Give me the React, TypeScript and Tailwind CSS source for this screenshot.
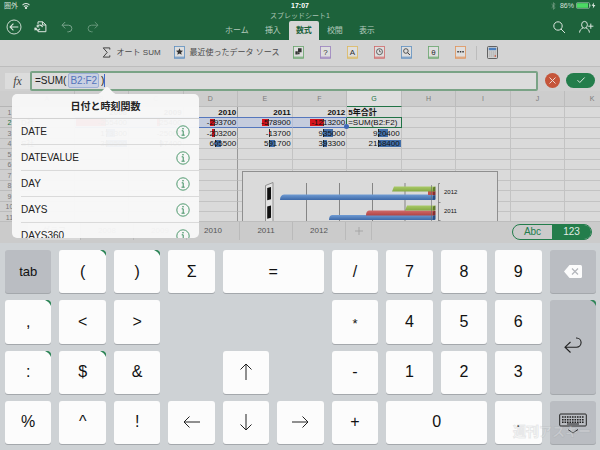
import type { CSSProperties, ReactNode } from "react"

interface Cell {
  text: string
  color?: "red" | "blue"
  left?: number
  width?: number
}

const COLUMNS = ["A", "B", "C", "D", "E", "F", "G", "H", "I", "J", "K"]
const ROWS = [1, 2, 3, 4, 5, 6, 7, 8, 9, 10, 11]

const CELLS: Record<string, Cell> = {
  B1: { text: "2008" },
  C1: { text: "2009" },
  D1: { text: "2010" },
  E1: { text: "2011" },
  F1: { text: "2012" },
  G1: { text: "5年合計" },
  A2: { text: "D社" },
  B2: { text: "-255400", color: "red", left: 2, width: 56 },
  C2: { text: "-25400", color: "red", left: 53, width: 5 },
  D2: { text: "-293700", color: "red", left: 49, width: 9 },
  E2: { text: "-578900", color: "red", left: 45, width: 13 },
  F2: { text: "-1213200", color: "red", left: 33, width: 25 },
  G2: { text: "=SUM(B2:F2)" },
  A3: { text: "A社" },
  B3: { text: "173300", color: "blue", left: 58, width: 18 },
  C3: { text: "-25000" },
  D3: { text: "-203200", color: "red", left: 53, width: 6 },
  E3: { text: "-13700", color: "red", left: 57, width: 1 },
  F3: { text: "935000", color: "blue", left: 57, width: 19 },
  G3: { text: "920400", color: "blue", left: 58, width: 18 },
  A4: { text: "S社" },
  B4: { text: "380500", color: "blue", left: 58, width: 40 },
  C4: { text: "97400", color: "blue", left: 58, width: 4 },
  D4: { text: "605500", color: "blue", left: 58, width: 12 },
  E4: { text: "591700", color: "blue", left: 58, width: 11 },
  F4: { text: "393300", color: "blue", left: 57, width: 8 },
  G4: { text: "2168400", color: "blue", left: 57, width: 43 },
}

const FUNCTIONS = ["DATE", "DATEVALUE", "DAY", "DAYS", "DAYS360"]
const SHEETS = ["グラフ", "2008", "2009", "2010", "2011", "2012"]

function StatusBar() {
  return (
    <div className="grid h-[11px] grid-cols-3 items-center px-1 text-[7px] leading-[11px] text-[#d5e0d9]">
      <div className="flex items-center gap-1">
        <span>圏外</span>
        <svg viewBox="0 0 8 6" className="h-[6px] w-2" fill="none" stroke="currentColor" strokeWidth="1.1">
          <path d="M.5 2.2C2.6.2 5.4.2 7.5 2.2M1.9 3.7c1.3-1.2 2.9-1.2 4.2 0" />
          <circle cx="4" cy="5" r=".6" fill="currentColor" />
        </svg>
      </div>
      <span className="text-center text-[7px] font-bold text-white">17:07</span>
      <div className="flex items-center justify-end gap-[2px]">
        <svg viewBox="0 0 5 8" className="mr-[2px] h-2 w-[5px]" fill="none" stroke="#7fa58e" strokeWidth=".7">
          <path d="M.6 2.2l3.6 3.4L2.4 7.3V.7l1.8 1.7L.6 5.8" />
        </svg>
        <span>86%</span>
        <svg viewBox="0 0 20 7" className="h-[7px] w-5">
          <rect x=".5" y=".7" width="13" height="5.6" rx=".8" fill="none" stroke="#b9d3c3" strokeWidth=".6" />
          <rect x="1" y="1.2" width="11" height="4.6" fill="#4cd964" />
          <path d="M14 2.5v2" stroke="#b9d3c3" />
          <path d="M18 .6l-2.4 3.2h1.6L16.8 6.4 19.4 3h-1.7z" fill="#e6efe9" />
        </svg>
      </div>
    </div>
  )
}

function Header() {
  return (
    <header className="bg-[#1d623b]">
      <StatusBar />
      <div className="grid grid-cols-[1fr_auto_1fr] text-[#dce6df]">
        <div className="flex items-center gap-3 pt-[2px] pl-[6px]">
          <button aria-label="戻る">
            <svg viewBox="0 0 16 16" className="size-4" fill="none" stroke="currentColor">
              <circle cx="8" cy="8" r="7" strokeWidth=".9" />
              <path d="M12.3 8H4.2M7.4 4.7L4.1 8l3.3 3.3" strokeWidth="1.1" />
            </svg>
          </button>
          <button aria-label="ファイル">
            <svg viewBox="0 0 14 14" className="size-[14px]" fill="none" stroke="currentColor" strokeWidth="1">
              <path d="M4 4.500V1.800h4.600l3.300 3v6.900H4V10" />
              <path d="M8.400 1.800V5h3.400" />
              <path d="M8.500 7.200A2.700 2.700 0 0 0 3.400 6.600M.9 7.600a2.700 2.700 0 0 0 5 1.100" strokeWidth="1.2" />
              <path d="M3.200 4.900v2h2M1 10.400V8.300h2" />
            </svg>
          </button>
          <button aria-label="元に戻す" className="text-[#78a38b]">
            <svg viewBox="0 0 14 14" className="size-[14px]" fill="none" stroke="currentColor" strokeWidth="1">
              <path d="M5.2 2L2 5.2l3.2 3.2M2 5.2h6.600a3.300 3.300 0 0 1 0 6.600H7.400" />
            </svg>
          </button>
          <button aria-label="やり直し" className="text-[#649679]">
            <svg viewBox="0 0 14 14" className="size-[14px]" fill="none" stroke="currentColor" strokeWidth="1">
              <path d="M8.800 2L12 5.200 8.800 8.400M12 5.200H5.400a3.300 3.300 0 0 0 0 6.600h1.200" />
            </svg>
          </button>
        </div>
        <div>
          <h1 className="text-center text-[7px] leading-[10px] text-[#a9c4b4]">スプレッドシート1</h1>
          <nav className="flex text-[8px] leading-[19px]">
            {["ホーム", "挿入", "数式", "校閲", "表示"].map((tab) => (
              <button
                key={tab}
                className={
                  tab === "数式"
                    ? "rounded-t-[2px] bg-[#d6d6d6] px-[7px] font-bold text-[#1d623b]"
                    : "px-2 text-[#b4cbbd]"
                }
              >
                {tab}
              </button>
            ))}
          </nav>
        </div>
        <div className="flex items-center justify-end gap-3 pt-[2px] pr-[6px]">
          <button aria-label="検索">
            <svg viewBox="0 0 14 14" className="size-[14px]" fill="none" stroke="currentColor" strokeWidth="1">
              <circle cx="6" cy="6" r="4.2" />
              <path d="M9 9l4 4" />
            </svg>
          </button>
          <button aria-label="共有">
            <svg viewBox="0 0 16 14" className="h-[14px] w-4" fill="none" stroke="currentColor" strokeWidth="1">
              <ellipse cx="6.5" cy="4.8" rx="2.9" ry="3.4" />
              <path d="M1.600 12.600c.1-2.400 1.200-3.600 3.200-4.400M8.200 8.200c2 .8 3.100 2 3.200 4.400M10.200 6.200h5.200M12.800 3.600v5.200" />
            </svg>
          </button>
        </div>
      </div>
    </header>
  )
}

function Book({ label, color, children }: { label: string; color: string; children: ReactNode }) {
  return (
    <button aria-label={label}>
      <svg viewBox="0 0 11 13" className="h-[13px] w-[11px]" style={{ color } as CSSProperties}>
        <rect x=".5" y=".5" width="10" height="11.8" fill="#dedede" stroke="currentColor" strokeWidth=".8" />
        <path d="M.5 11.2h10" stroke="currentColor" strokeWidth="1" />
        <g fill="#333" fontFamily="Liberation Sans, sans-serif" fontSize="8" textAnchor="middle">
          {children}
        </g>
      </svg>
    </button>
  )
}

function Ribbon() {
  return (
    <div className="flex h-[27px] items-center justify-center border-b border-[#bdbdbd] bg-[#d4d4d4] pb-px text-[8px] text-[#4a4a4a]">
      <button className="flex items-center gap-[6px]">
        <svg viewBox="0 0 9 11" className="h-[11px] w-[9px]" fill="none" stroke="#444" strokeWidth="1">
          <path d="M7.800 2.600V.9H1.200l4 4.500-4 4.700h6.600V8.300" />
        </svg>
        オート SUM
      </button>
      <div className="ml-[13px] flex items-center gap-[5px]">
        <Book label="最近使った関数" color="#5f8fc0">
          <path d="M5.500 2.300l1 2.300 2.500.2-1.900 1.600.6 2.400-2.200-1.300-2.200 1.300.6-2.400L2 4.800l2.500-.2z" />
        </Book>
        <span>最近使ったデータ ソース</span>
      </div>
      <div className="ml-[14px] flex items-center gap-4">
        <Book label="財務" color="#68a56c">
          <path d="M5 2.200h3.600v4H5zM2.400 5.200h2.400v3.400H2.400zM5 6.400h1.600v1.800H5z" />
        </Book>
        <Book label="論理" color="#9a80bd">
          <text x="5.5" y="9">?</text>
        </Book>
        <Book label="文字列" color="#dcb95f">
          <text x="5.5" y="9">A</text>
        </Book>
        <Book label="日付と時刻" color="#cf6a6a">
          <circle cx="5.5" cy="5.7" r="3" fill="none" stroke="#444" strokeWidth=".8" />
          <path d="M5.500 3.800v2h1.700" fill="none" stroke="#444" strokeWidth=".7" />
        </Book>
        <Book label="検索/行列" color="#5f8fc0">
          <circle cx="4.9" cy="5" r="2.3" fill="none" stroke="#333" strokeWidth=".8" />
          <path d="M6.600 6.700l2.300 2.300" stroke="#333" strokeWidth="1" />
        </Book>
        <Book label="数学/三角" color="#68a56c">
          <text x="5.5" y="9">θ</text>
        </Book>
        <Book label="その他の関数" color="#e0935a">
          <path d="M2.300 5h1.500v1.500H2.300zM4.800 5h1.500v1.500H4.800zM7.300 5h1.500v1.500H7.300z" />
        </Book>
      </div>
      <span className="ml-[10px] h-[14px] w-px bg-[#bcbcbc]" />
      <button aria-label="再計算" className="ml-[10px]">
        <svg viewBox="0 0 11 13" className="h-[13px] w-[11px]">
          <rect x=".5" y=".5" width="10" height="12" rx="1" fill="#cfcfcf" stroke="#555" strokeWidth=".9" />
          <path d="M1.800 1.800h7.400v2.400H1.800z" fill="#4c80be" />
          <path d="M2 6h7M2 8h7M2 10h7" stroke="#aaa" strokeWidth="1" strokeDasharray="1.4 .6" />
          <path d="M7.600 10h1.400" stroke="#d0573c" strokeWidth="1.4" />
        </svg>
      </button>
    </div>
  )
}

function FormulaBar() {
  return (
    <div className="flex h-6 items-center bg-[#d0d0d0] px-[5px] pt-[3px]">
      <label
        htmlFor="formula"
        className="h-4 w-[25px] bg-[#dcdcdc] text-center font-['Liberation_Serif',serif] text-[12px] leading-4 text-[#444] italic"
      >
        fx
      </label>
      <div className="flex h-5 flex-1 items-center rounded-[2px] border-2 border-[#7aa386] bg-[#dcdcdc] pl-[3px] text-[10px] leading-4 text-[#222]">
        <span>=SUM(</span>
        <span className="mx-[2px] rounded-[2px] border border-[#9fb0d8] bg-[#c9d0e2] px-px leading-[13px] text-[#5474bb]">
          B2:F2
        </span>
        <input
          id="formula"
          defaultValue=")"
          className="field-sizing-content bg-transparent text-[#222] outline-none"
        />
        <span className="h-[13px] w-px bg-[#4267c9]" />
      </div>
      <div className="ml-[7px] flex items-center gap-[6px] pb-px">
        <button aria-label="キャンセル" className="size-[15px] rounded-full bg-[#c5553a]">
          <svg viewBox="0 0 15 15" className="size-[15px]" stroke="#eadad5" strokeWidth="1">
            <path d="M4.500 4.500l6 6M10.500 4.500l-6 6" />
          </svg>
        </button>
        <button aria-label="確定" className="flex h-[15px] w-[29px] items-center justify-center rounded-full bg-[#237d4b]">
          <svg viewBox="0 0 10 8" className="h-2 w-[10px]" fill="none" stroke="#d8e8de" strokeWidth="1">
            <path d="M1.500 4.200l2.300 2.300 4.800-5" />
          </svg>
        </button>
      </div>
    </div>
  )
}

function DataCell({ id }: { id: string }) {
  const cell = CELLS[id]
  const column = id[0]
  const selected = /^[B-F]2$/.test(id)
  const active = id === "G2"
  const leftAligned = column === "A" || id === "G1" || active
  let look = "border-[#c3c3c3]"
  if (selected) look = "border-r-[#b4bfd8] border-b-[#5577bd] bg-[#c5ccdd] shadow-[0_-1px_0_#5577bd]"
  if (active) look = "border-[#217346] shadow-[0_-1px_0_#217346,-1px_0_0_#217346]"
  if (column === "D" && !selected) look = "border-b-[#c3c3c3] border-r-[#989898]"

  return (
    <td className={`relative border-r border-b p-0 ${look}`}>
      {cell?.color && (
        <span
          className={`absolute inset-y-px border-dashed ${
            cell.color === "red" ? "border-r border-[#333] bg-[#d4131d]" : "border-l border-[#222] bg-[#426fa9]"
          }`}
          style={{ left: `${cell.left}%`, width: `${cell.width}%` }}
        />
      )}
      {cell && (
        <span
          className={`relative block px-px whitespace-nowrap ${leftAligned ? "text-left" : "text-right"} ${
            id[1] === "1" ? "font-bold" : ""
          }`}
        >
          {cell.text}
        </span>
      )}
      {id === "F2" && <span className="absolute -right-[3px] -bottom-[2px] z-10 size-[5px] rounded-full bg-[#3f68b8]" />}
    </td>
  )
}

function SheetChart() {
  return (
    <svg
      viewBox="0 0 256 60"
      className="absolute top-[80px] left-[242px] h-[60px] w-[256px]"
      fontFamily="Liberation Sans, sans-serif"
    >
      <defs>
        <linearGradient id="blueBar" x2="0" y2="1">
          <stop offset="0" stopColor="#6f9bd3" />
          <stop offset="1" stopColor="#3d69a8" />
        </linearGradient>
        <linearGradient id="redBar" x2="0" y2="1">
          <stop offset="0" stopColor="#d0696a" />
          <stop offset="1" stopColor="#b04444" />
        </linearGradient>
        <linearGradient id="greenBar" x2="0" y2="1">
          <stop offset="0" stopColor="#a9ca66" />
          <stop offset="1" stopColor="#86a946" />
        </linearGradient>
      </defs>
      <rect x=".5" y=".5" width="255" height="80" fill="#dadada" stroke="#8f8f8f" />
      <path d="M23.500 70V14.500l7.500-3V70" fill="#e2e2e2" stroke="#888" strokeWidth=".9" />
      <path d="M25.200 17l3.800-1v12.200l-3.800 1zM25.200 35.500l3.800-1v12.200l-3.800 1z" fill="#111" />
      <path d="M64.500 12v60M97.500 12v60M130.500 12v60M163 12v60" stroke="#858585" />
      <path d="M38 29q0-5 4-5.500h151v5.500z" fill="url(#blueBar)" />
      <path d="M186 20h6l1 4h-7z" fill="#c0524d" />
      <path d="M150 20.500l2-5h41v5z" fill="url(#greenBar)" />
      <path d="M87 49q0-4.500 3-5h103v5z" fill="url(#blueBar)" />
      <path d="M124 44.500q0-4.500 3-5h66v5z" fill="url(#redBar)" />
      <path d="M163 39.500l2-5h28v5z" fill="url(#greenBar)" />
      <path d="M191 20.500v-4l2.500-1v4.500zM191 39.500v-4l2.500-1v4.500z" fill="#5e792c" />
      <path d="M191 24.500v-3.500l2.500-1v4zM191 44.500v-4l2.500-1v4.500z" fill="#842f30" />
      <path d="M191 29v-4l2.500-1v4.500zM191 49v-4l2.500-1v4.500z" fill="#2b4f85" />
      <path d="M189.500 14v56" stroke="#6b6b6b" strokeWidth=".6" />
      <path d="M198 12.500h-1.500V70M196.500 31.500h2M196.500 49.500h2" fill="none" stroke="#777" strokeWidth=".8" />
      <text x="202" y="23" fontSize="6" fill="#111">2012</text>
      <text x="202" y="42" fontSize="6" fill="#111">2011</text>
    </svg>
  )
}

function Sheet() {
  return (
    <main className="relative min-h-0 flex-1 overflow-hidden bg-[#dadada]">
      <table className="w-[calc(100%+20px)] table-fixed border-separate border-spacing-0 text-[8px] leading-[9px] text-[#111]">
        <thead>
          <tr className="h-4 bg-[#cdcdcd] text-[7px] text-[#7b7b7b]">
            <th className="w-5 border-b border-[#b5b5b5] p-0" />
            {COLUMNS.map((column) => (
              <th
                key={column}
                className={`border-r p-0 font-normal ${
                  column === "G"
                    ? "border-r-[#bcbcbc] border-b border-b-[#217346] bg-[#dedede] text-[#217346]"
                    : "border-b border-[#bcbcbc]"
                }`}
              >
                {column}
              </th>
            ))}
          </tr>
        </thead>
        <tbody>
          {ROWS.map((row) => (
            <tr key={row} className="h-[11px] even:h-[10px]">
              <th
                className={`border-r border-b border-[#bcbcbc] bg-[#cfcfcf] p-0 text-[7px] font-normal ${
                  row === 2 ? "text-[#217346]" : "text-[#777]"
                }`}
              >
                {row}
              </th>
              {COLUMNS.map((column) => (
                <DataCell key={column} id={`${column}${row}`} />
              ))}
            </tr>
          ))}
        </tbody>
      </table>
      <SheetChart />
    </main>
  )
}

function SheetTabs() {
  return (
    <footer className="flex h-[22px] items-stretch border-t border-[#bdbdbd] bg-[#cbcbcb] pb-[3px] pl-[28px] text-[8px] text-[#555]">
      {SHEETS.map((sheet) => (
        <button
          key={sheet}
          className={`w-[53px] border-r border-[#bababa] ${sheet === "グラフ" ? "bg-[#d8d8d8]" : ""}`}
        >
          {sheet}
        </button>
      ))}
      <button aria-label="シートの追加" className="flex w-[26px] items-center justify-center border-r border-[#bababa]">
        <svg viewBox="0 0 8 8" className="size-2" stroke="#a0a0a0" strokeWidth=".8">
          <path d="M0 4h8M4 0v8" />
        </svg>
      </button>
      <div className="mt-[2px] mr-2 ml-auto grid w-20 grid-cols-2 overflow-hidden rounded-full border border-[#237d4b] text-[10px] leading-[14px]">
        <button className="text-[#237d4b]">Abc</button>
        <button className="bg-[#237d4b] text-[#e0ece5]">123</button>
      </div>
    </footer>
  )
}

function FunctionMenu() {
  return (
    <section className="absolute top-[94px] left-3 h-36 w-[187px] text-[#222]">
      <svg viewBox="0 0 20 8" className="absolute -top-[7px] left-[85px] h-2 w-5" fill="#f6f6f6">
        <path d="M0 7.500C4 7 7.500 0 10 0s6 7 10 7.500z" />
      </svg>
      <div className="h-full overflow-hidden rounded-[5px] bg-[#f8f8f8]/96">
        <h2 className="h-[25px] border-b border-[#d2d2d2] text-center text-[10px] leading-[25px] font-bold">
          日付と時刻関数
        </h2>
        <ul className="pl-[9px]">
          {FUNCTIONS.map((name) => (
            <li key={name} className="flex h-[26px] items-center justify-between border-b border-[#dadada] pr-[9px]">
              <button className="text-[10px]">{name}</button>
              <button aria-label={`${name} の情報`}>
                <svg viewBox="0 0 14 14" className="size-[14px]" fill="none" stroke="#3d8f60">
                  <circle cx="7" cy="7" r="6.2" strokeWidth=".9" />
                  <path d="M5.700 5.800h1.500v4.200M5.500 10.200h3.200" strokeWidth="1" />
                  <circle cx="7" cy="3.7" r=".8" fill="#3d8f60" stroke="none" />
                </svg>
              </button>
            </li>
          ))}
        </ul>
      </div>
    </section>
  )
}

interface KeyProps {
  label?: string
  children: ReactNode
  place?: string
  gray?: boolean
  corner?: boolean
}

function Key({ label, children, place = "", gray, corner }: KeyProps) {
  return (
    <button
      aria-label={label}
      className={`relative flex items-center justify-center overflow-hidden rounded-[3px] shadow-[0_1px_0_#a4a8ac] ${
        gray ? "bg-[#babdc2]" : "bg-[#fcfcfc]"
      } ${place}`}
    >
      {children}
      {corner && (
        <svg viewBox="0 0 6 6" className="absolute top-0 right-0 size-[6px]" fill="#2f8558">
          <path d="M0 0h3.500Q6 .3 6 2.500V6Q4.500 2 0 0z" />
        </svg>
      )}
    </button>
  )
}

const ARROWS: Record<string, string> = {
  up: "M9 17V1M3.500 6.500L9 1l5.500 5.500",
  down: "M9 1v16M3.500 11.500L9 17l5.500-5.500",
  left: "M17 9H1M6.500 3.500L1 9l5.500 5.500",
  right: "M1 9h16M11.500 3.500L17 9l-5.500 5.500",
}

function Arrow({ direction }: { direction: string }) {
  return (
    <svg viewBox="0 0 18 18" className="size-[18px]" fill="none" stroke="#222" strokeWidth="1">
      <path d={ARROWS[direction]} />
    </svg>
  )
}

function Keyboard() {
  return (
    <div className="relative bg-[#ced2d5] pt-[7px] pr-1 pb-[6px] pl-[5px]">
      <div className="grid min-h-[194px] grid-cols-11 grid-rows-4 gap-x-2 gap-y-[7px] text-[16px] leading-5 text-[#111]">
        <Key gray><span className="text-[13px]">tab</span></Key>
        <Key corner>(</Key>
        <Key corner>)</Key>
        <Key>Σ</Key>
        <Key place="col-span-2">=</Key>
        <Key>/</Key>
        <Key>7</Key>
        <Key>8</Key>
        <Key>9</Key>
        <Key gray label="削除">
          <svg viewBox="0 0 18 13" className="h-[13px] w-[18px]">
            <path d="M5.500 0H16.500Q18 0 18 1.500v10Q18 13 16.500 13H5.500L0 6.500z" fill="#fcfcfc" />
            <path d="M8 3.500l6 6M14 3.500l-6 6" stroke="#b3b6bb" strokeWidth="1.2" />
          </svg>
        </Key>

        <Key corner>,</Key>
        <Key>&lt;</Key>
        <Key>&gt;</Key>
        <Key place="col-start-7"><span className="pt-1 text-[13px]">*</span></Key>
        <Key>4</Key>
        <Key>5</Key>
        <Key>6</Key>
        <Key gray corner label="改行" place="row-span-2">
          <svg viewBox="0 0 18 16" className="mb-1 h-4 w-[18px]" fill="none" stroke="#222" strokeWidth="1.1">
            <path d="M6.500 5L1 10.200l5.500 5.300M1 10.200h11.500a4.600 4.600 0 0 0 0-9.200H12" />
          </svg>
        </Key>

        <Key corner>:</Key>
        <Key corner>$</Key>
        <Key>&amp;</Key>
        <Key label="上" place="col-start-5"><Arrow direction="up" /></Key>
        <Key place="col-start-7">-</Key>
        <Key>1</Key>
        <Key>2</Key>
        <Key>3</Key>

        <Key>%</Key>
        <Key>^</Key>
        <Key>!</Key>
        <Key label="左"><Arrow direction="left" /></Key>
        <Key label="下"><Arrow direction="down" /></Key>
        <Key label="右"><Arrow direction="right" /></Key>
        <Key>+</Key>
        <Key place="col-span-2">0</Key>
        <Key>.</Key>
        <Key gray label="キーボードを閉じる">
          <svg viewBox="0 0 28 22" className="mt-[3px] h-[22px] w-7" fill="none" stroke="#222">
            <rect x=".7" y="1" width="26.6" height="12" rx="1" />
            <path d="M3 4h22M3 6.700h22M3 9.300h22" strokeWidth="1.5" strokeDasharray="1.6 .9" />
            <path d="M8 11h12" strokeWidth="1.2" />
            <path d="M9 16.500l5 3.500 5-3.500" />
          </svg>
        </Key>
      </div>
      <span className="absolute right-[9px] bottom-2 text-[13px] leading-5 font-bold text-white/25 [-webkit-text-stroke:1px_#8f949933]">
        週刊アスキー
      </span>
    </div>
  )
}

export default function App() {
  return (
    <div className="relative flex h-screen flex-col overflow-hidden font-['Liberation_Sans','Noto_Sans_CJK_JP',sans-serif]">
      <Header />
      <Ribbon />
      <FormulaBar />
      <Sheet />
      <SheetTabs />
      <Keyboard />
      <FunctionMenu />
    </div>
  )
}
